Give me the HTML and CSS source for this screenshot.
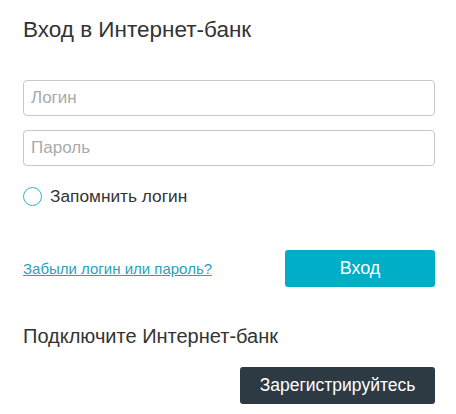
FILE: index.html
```html
<!DOCTYPE html>
<html lang="ru">
<head>
<meta charset="utf-8">
<link rel="stylesheet" href="styles.css">
</head>
<body>
<div class="panel">
  <h1 class="title">Вход в Интернет-банк</h1>
  <form class="form">
    <input class="field" type="text" placeholder="Логин">
    <input class="field" type="password" placeholder="Пароль">
    <label class="remember"><span class="radio"></span><span>Запомнить логин</span></label>
    <div class="actions">
      <a class="forgot" href="#">Забыли логин или пароль?</a>
      <button class="btn btn-login" type="button">Вход</button>
    </div>
  </form>
  <h2 class="subtitle">Подключите Интернет-банк</h2>
  <div class="register-row">
    <button class="btn btn-register" type="button">Зарегистрируйтесь</button>
  </div>
</div>
</body>
</html>
```
FILE: styles.css
```css
html, body {
  margin: 0;
  padding: 0;
  background: #fff;
}
body {
  font-family: "Liberation Sans", Arial, sans-serif;
  color: #333;
}
.panel {
  width: 412px;
  padding: 17px 0 0 23px;
}
.title {
  margin: 0;
  font-size: 22.5px;
  font-weight: normal;
  line-height: 26px;
  color: #333;
}
.form {
  display: flex;
  flex-direction: column;
  margin-top: 37px;
}
.field {
  box-sizing: border-box;
  width: 412px;
  height: 36px;
  margin: 0 0 14px 0;
  padding: 0 7px;
  border: 1px solid #c8c8c8;
  border-radius: 4px;
  font-family: "Liberation Sans", Arial, sans-serif;
  font-size: 17px;
  color: #333;
  outline: none;
}
.field::placeholder {
  color: #a9a9a9;
}
.remember {
  display: flex;
  align-items: center;
  gap: 8px;
  margin-top: 6px;
  font-size: 17.3px;
  color: #333;
  line-height: 20px;
}
.radio {
  box-sizing: border-box;
  width: 19px;
  height: 19px;
  border: 1.5px solid #38b3c6;
  border-radius: 50%;
}
.actions {
  display: flex;
  justify-content: space-between;
  align-items: center;
  margin-top: 44px;
}
.forgot {
  font-size: 15px;
  color: #2b9fc0;
  text-decoration: underline;
}
.btn {
  border: none;
  border-radius: 3px;
  color: #fff;
  font-family: "Liberation Sans", Arial, sans-serif;
  cursor: pointer;
}
.btn-login {
  width: 150px;
  height: 37px;
  background: #00aec8;
  font-size: 18px;
}
.subtitle {
  margin: 37px 0 0 0;
  font-size: 20px;
  font-weight: normal;
  line-height: 24px;
  color: #333;
}
.register-row {
  display: flex;
  justify-content: flex-end;
  margin-top: 19px;
}
.btn-register {
  width: 195px;
  height: 37px;
  background: #2d3a44;
  font-size: 17.5px;
}
```
